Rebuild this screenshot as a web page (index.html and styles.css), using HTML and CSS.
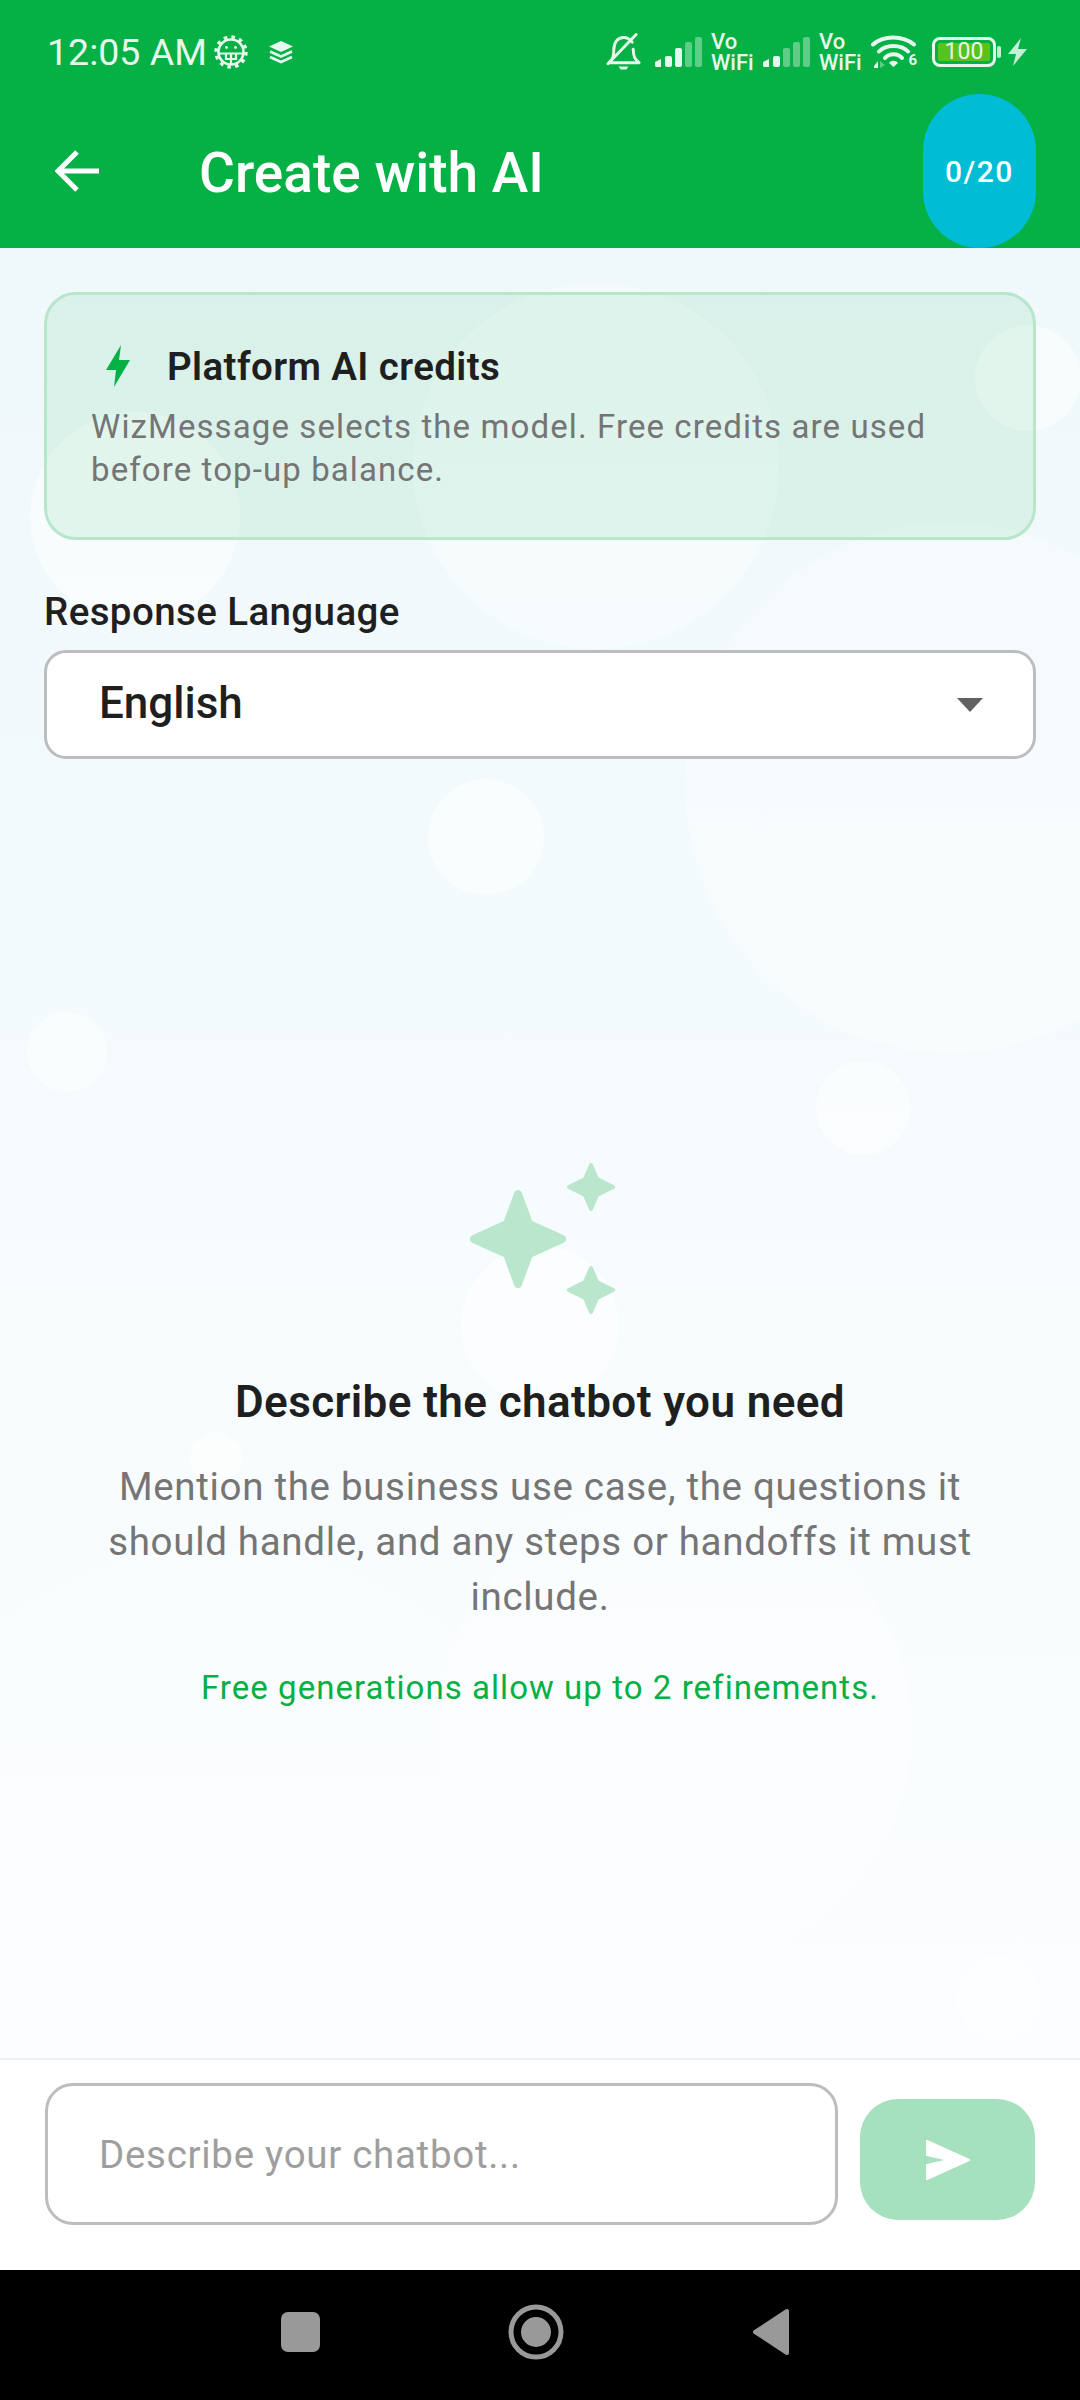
FILE: index.html

```html
<!DOCTYPE html>
<html lang="en">
<head>
    <meta charset="UTF-8">
    <meta name="viewport" content="width=device-width, initial-scale=1.0">
    <title>Create with AI</title>
    <link rel="stylesheet" href="styles.css">
</head>
<body>
<div class="screen">

    <!-- Green header with status bar -->
    <header class="header">
        <div class="status-bar">
            <div class="status-left">
                <span class="clock">12:05 AM</span>
                <svg class="gear" viewBox="0 0 34 34">
                    <circle cx="17" cy="17" r="12.5" fill="none" stroke="#e6f7ed" stroke-width="2.6"/>
                    <circle cx="17" cy="17" r="15" fill="none" stroke="#e6f7ed" stroke-width="3.4" stroke-dasharray="3.6 4.25"/>
                    <path d="M5 18.5H29M12 18.5V24H22V18.5M17 18.5V29" fill="none" stroke="#e6f7ed" stroke-width="2.2"/>
                    <circle cx="12.5" cy="12.5" r="1.4" fill="#e6f7ed"/>
                    <circle cx="21.5" cy="12.5" r="1.4" fill="#e6f7ed"/>
                </svg>
                <svg class="stack" viewBox="0 0 24 23">
                    <path d="M12 0L24 5.5L12 11L0 5.5Z" fill="#e6f7ed"/>
                    <path d="M1 10.5L12 15.5L23 10.5M1 16L12 21L23 16" fill="none" stroke="#e6f7ed" stroke-width="2.6"/>
                </svg>
            </div>
            <div class="status-right">
                <svg class="bell" viewBox="0 0 36 38">
                    <path d="M3 30C7 27 8 24 8 17C8 9 12 4 18 4C22 4 25 6 27 9M28 16C28 24 30 27 34 30H3" fill="none" stroke="#e6f7ed" stroke-width="3" stroke-linejoin="round" stroke-linecap="round"/>
                    <path d="M13 34H23L21 37H15Z" fill="#e6f7ed"/>
                    <path d="M2 31L31 1" stroke="#e6f7ed" stroke-width="3" stroke-linecap="round"/>
                </svg>
                <svg class="signal" viewBox="0 0 48 32">
                    <path d="M1 30V26L7 23V31H2Z" fill="#e6f7ed"/>
                    <rect x="11" y="20" width="7" height="11" rx="2" fill="#e6f7ed"/>
                    <rect x="21" y="12" width="7" height="19" rx="2" fill="#e6f7ed"/>
                    <rect x="31" y="6" width="7" height="25" rx="2" fill="#e6f7ed" opacity=".4"/>
                    <rect x="41" y="1" width="7" height="30" rx="2" fill="#e6f7ed" opacity=".4"/>
                </svg>
                <span class="vowifi">Vo<br>WiFi</span>
                <svg class="signal" viewBox="0 0 48 32">
                    <path d="M1 30V26L7 23V31H2Z" fill="#e6f7ed"/>
                    <rect x="11" y="20" width="7" height="11" rx="2" fill="#e6f7ed"/>
                    <rect x="21" y="12" width="7" height="19" rx="2" fill="#e6f7ed" opacity=".4"/>
                    <rect x="31" y="6" width="7" height="25" rx="2" fill="#e6f7ed" opacity=".4"/>
                    <rect x="41" y="1" width="7" height="30" rx="2" fill="#e6f7ed" opacity=".4"/>
                </svg>
                <span class="vowifi">Vo<br>WiFi</span>
                <div class="wifi">
                    <svg viewBox="0 0 46 34">
                        <path d="M2 9.5C12 0 32 0 43 9.5M8 16.5C15 9 30 9 37 16.5M14 23C18 18 27 18 31 23" fill="none" stroke="#e6f7ed" stroke-width="4" stroke-linecap="round"/>
                        <path d="M18 28C20 25 25 25 27 28L22.500 32Z" fill="#e6f7ed"/>
                        <path d="M3 31L7 26V33H3Z" fill="#e6f7ed"/>
                        <path d="M9 26L14 30L9 33Z" fill="#e6f7ed" opacity=".4"/>
                    </svg>
                    <span class="wifi-six">6</span>
                </div>
                <div class="battery-wrap">
                    <div class="battery"><span class="battery-fill">100</span></div>
                    <span class="battery-nub"></span>
                </div>
                <svg class="charge" viewBox="0 0 19 28">
                    <path d="M13 0L0 16H8L5 28L19 11H10Z" fill="#c9eed7"/>
                </svg>
            </div>
        </div>
        <div class="app-bar">
            <svg class="back" viewBox="0 0 44 44">
                <path d="M44 22H4M22 3L3 22L22 41" fill="none" stroke="#fff" stroke-width="5"/>
            </svg>
            <h1 class="title">Create with AI</h1>
            <div class="counter">0/20</div>
        </div>
    </header>

    <!-- Main content -->
    <main class="content">
        <div class="bubble b1"></div>
        <div class="bubble b2"></div>
        <div class="bubble b3"></div>
        <div class="bubble b4"></div>
        <div class="bubble b5"></div>
        <div class="bubble b6"></div>
        <div class="bubble b7"></div>
        <div class="bubble b8"></div>
        <div class="bubble b9"></div>
        <div class="bubble b10"></div>
        <div class="bubble b11"></div>
        <div class="bubble b12"></div>

        <section class="credits-card">
            <div class="credits-head">
                <svg class="bolt" viewBox="0 0 24 42">
                    <path d="M15 0L0 25H10L8 42L24 15H13Z" fill="#05b044"/>
                </svg>
                <span class="credits-title">Platform AI credits</span>
            </div>
            <p class="credits-text">WizMessage selects the model. Free credits are used before top-up balance.</p>
        </section>

        <label class="field-label">Response Language</label>
        <div class="select">
            <span>English</span>
            <span class="caret"></span>
        </div>

        <section class="empty">
            <svg class="sparkles" viewBox="0 0 160 160">
                <path class="star-big" d="M58 36L69 66L102 81L69 96L58 126L47 96L14 81L47 66Z"/>
                <path class="star-small" d="M131 7L137 21L153 29L137 37L131 51L125 37L109 29L125 21Z"/>
                <path class="star-small" d="M131 110L137 124L153 132L137 140L131 154L125 140L109 132L125 124Z"/>
            </svg>
            <h2 class="empty-title">Describe the chatbot you need</h2>
            <p class="empty-text">Mention the business use case, the questions it should handle, and any steps or handoffs it must include.</p>
            <p class="empty-note">Free generations allow up to 2 refinements.</p>
        </section>
    </main>

    <!-- Composer -->
    <footer class="composer">
        <div class="prompt">Describe your chatbot...</div>
        <button class="send">
            <svg viewBox="0 0 46 42">
                <path d="M2 2L44 21L2 40V26L24 21L2 16Z" fill="#fff" stroke="#fff" stroke-width="2" stroke-linejoin="round"/>
            </svg>
        </button>
    </footer>

    <!-- Android navigation bar -->
    <nav class="nav-bar">
        <span class="nav-square"></span>
        <svg class="nav-home" viewBox="0 0 56 56">
            <circle cx="28" cy="28" r="25" fill="none" stroke="#999" stroke-width="5"/>
            <circle cx="28" cy="28" r="15" fill="#999"/>
        </svg>
        <svg class="nav-back" viewBox="0 0 38 48">
            <path d="M35 3V45L3 24Z" fill="#999" stroke="#999" stroke-width="4" stroke-linejoin="round"/>
        </svg>
    </nav>

</div>
</body>
</html>
```

FILE: styles.css

```css
/* Basic resets and body styling */
* {
    box-sizing: border-box;
}

body {
    margin: 0;
    font-family: Roboto, Arial, sans-serif;
    background-color: #fff;
}

.screen {
    width: 1080px;
    height: 2400px;
    display: flex;
    flex-direction: column;
    overflow: hidden;
}

/* Header */
.header {
    height: 248px;
    background-color: #05b044;
    flex-shrink: 0;
}

.status-bar {
    height: 94px;
    padding: 10px 53px 0 47px;
    display: flex;
    justify-content: space-between;
    align-items: center;
    color: #e6f7ed;
}

.status-left,
.status-right {
    display: flex;
    align-items: center;
}

.clock {
    font-size: 37.5px;
    line-height: 40px;
}

.gear {
    width: 34px;
    height: 34px;
    margin-left: 7px;
}

.stack {
    width: 24px;
    height: 23px;
    margin-left: 21px;
}

.bell {
    width: 35px;
    height: 38px;
    margin-right: 3px;
}

.signal {
    width: 48px;
    height: 32px;
    margin-left: 10px;
}

.vowifi {
    width: 41px;
    margin-left: 9px;
    font-size: 22px;
    line-height: 21px;
    font-weight: 500;
}

.wifi {
    position: relative;
    width: 46px;
    height: 34px;
    margin-left: 11px;
}

.wifi svg {
    display: block;
    width: 46px;
    height: 34px;
}

.wifi-six {
    position: absolute;
    right: 0;
    bottom: 1px;
    font-size: 15px;
    line-height: 15px;
    font-weight: 700;
}

.battery-wrap {
    display: flex;
    align-items: center;
    margin-left: 15px;
}

.battery {
    width: 64px;
    height: 30px;
    padding: 3px;
    border: 3px solid #e6f7ed;
    border-radius: 8px;
    display: flex;
}

.battery-fill {
    flex: 1;
    background-color: #57c31b;
    border-radius: 2px;
    font-size: 23px;
    line-height: 18px;
    text-align: center;
}

.battery-nub {
    width: 4px;
    height: 12px;
    margin-left: 1px;
    border-radius: 2px;
    background-color: #c9eed7;
}

.charge {
    width: 19px;
    height: 28px;
    margin-left: 7px;
}

.app-bar {
    height: 154px;
    padding: 0 44px 0 55px;
    display: flex;
    align-items: center;
}

.back {
    width: 44px;
    height: 44px;
}

.title {
    flex: 1;
    margin: 3px 0 0 100px;
    color: #fff;
    font-size: 55px;
    font-weight: 500;
}

.counter {
    align-self: stretch;
    width: 113px;
    display: flex;
    align-items: center;
    justify-content: center;
    border-radius: 57px;
    background-color: #00bcd4;
    color: #fff;
    font-size: 30px;
    font-weight: 500;
    letter-spacing: 1.5px;
}

/* Main content */
.content {
    position: relative;
    flex: 1;
    overflow: hidden;
    padding: 44px 44px 0;
    background: linear-gradient(180deg, #eff8fb 0%, #f5fbfd 45%, #fbfdfe 100%);
}

.bubble {
    position: absolute;
    border-radius: 50%;
    background-color: rgba(255, 255, 255, 0.35);
}

.b1 { left: 413px; top: 35px; width: 366px; height: 366px; }
.b2 { left: 30px; top: 164px; width: 210px; height: 210px; background-color: rgba(255, 255, 255, 0.5); }
.b3 { left: 975px; top: 77px; width: 106px; height: 106px; background-color: rgba(255, 255, 255, 0.5); }
.b4 { left: 685px; top: 275px; width: 530px; height: 530px; background-color: rgba(255, 255, 255, 0.28); }
.b5 { left: 428px; top: 531px; width: 116px; height: 116px; background-color: rgba(255, 255, 255, 0.5); }
.b6 { left: 27px; top: 764px; width: 80px; height: 80px; background-color: rgba(255, 255, 255, 0.5); }
.b7 { left: 816px; top: 813px; width: 94px; height: 94px; background-color: rgba(255, 255, 255, 0.5); }
.b8 { left: 461px; top: 998px; width: 158px; height: 158px; background-color: rgba(255, 255, 255, 0.6); }
.b9 { left: 190px; top: 1184px; width: 52px; height: 52px; background-color: rgba(255, 255, 255, 0.6); }
.b10 { left: 438px; top: 1245px; width: 474px; height: 474px; background-color: rgba(255, 255, 255, 0.3); }
.b11 { left: -130px; top: 1300px; width: 700px; height: 700px; background-color: rgba(255, 255, 255, 0.25); }
.b12 { left: 957px; top: 1708px; width: 84px; height: 84px; background-color: rgba(255, 255, 255, 0.6); }

.credits-card {
    position: relative;
    height: 248px;
    padding: 50px 44px 0 44px;
    border: 3px solid #b7e6ca;
    border-radius: 32px;
    background-color: rgba(5, 176, 68, 0.09);
}

.credits-head {
    display: flex;
    align-items: center;
    margin-bottom: 18px;
    height: 42px;
}

.bolt {
    width: 24px;
    height: 42px;
    margin-left: 15px;
}

.credits-title {
    margin-left: 37px;
    color: #1f1f1f;
    font-size: 38.5px;
    font-weight: 600;
    letter-spacing: 0.4px;
}

.credits-text {
    margin: 0;
    color: #757575;
    font-size: 33px;
    line-height: 43px;
    letter-spacing: 1.1px;
}

.field-label {
    position: relative;
    display: block;
    margin-top: 50px;
    color: #1f1f1f;
    font-size: 38.5px;
    line-height: 44px;
    font-weight: 500;
    letter-spacing: 0.4px;
}

.select {
    position: relative;
    height: 109px;
    margin-top: 16px;
    padding: 0 50px 3px 52px;
    display: flex;
    align-items: center;
    justify-content: space-between;
    border: 3px solid #bdbdbd;
    border-radius: 22px;
    background-color: #fff;
    color: #1f1f1f;
    font-size: 44px;
    font-weight: 500;
}

.caret {
    width: 0;
    height: 0;
    margin-top: 4px;
    border-left: 13px solid transparent;
    border-right: 13px solid transparent;
    border-top: 14px solid #616161;
}

/* Empty state */
.empty {
    position: relative;
    display: flex;
    flex-direction: column;
    align-items: center;
    text-align: center;
    margin-top: 399px;
}

.sparkles {
    width: 160px;
    height: 160px;
}

.star-big {
    fill: #b9e6cd;
    stroke: #b9e6cd;
    stroke-width: 8;
    stroke-linejoin: round;
}

.star-small {
    fill: #b9e6cd;
    stroke: #b9e6cd;
    stroke-width: 4;
    stroke-linejoin: round;
}

.empty-title {
    margin: 56px 0 0;
    color: #1f1f1f;
    font-size: 44px;
    line-height: 56px;
    font-weight: 600;
    letter-spacing: 0.4px;
}

.empty-text {
    width: 880px;
    margin: 29px 0 0;
    color: #757575;
    font-size: 38.5px;
    line-height: 55px;
    letter-spacing: 0.68px;
}

.empty-note {
    margin: 42px 0 0;
    color: #05b044;
    font-size: 33px;
    line-height: 44px;
    letter-spacing: 1.05px;
}

/* Composer */
.composer {
    height: 212px;
    flex-shrink: 0;
    padding: 23px 45px 0;
    display: flex;
    align-items: flex-start;
    gap: 22px;
    border-top: 2px solid #f0f0f0;
    background-color: #fff;
}

.prompt {
    flex: 1;
    height: 142px;
    padding: 0 51px;
    display: flex;
    align-items: center;
    border: 3px solid #bdbdbd;
    border-radius: 28px;
    color: #9e9e9e;
    font-size: 38.5px;
    letter-spacing: 0.7px;
}

.send {
    width: 175px;
    height: 121px;
    margin-top: 16px;
    padding: 0;
    border: none;
    border-radius: 38px;
    background-color: #a6e1bd;
}

.send svg {
    display: block;
    width: 46px;
    height: 42px;
    margin: 0 auto;
}

/* Android navigation bar */
.nav-bar {
    height: 130px;
    flex-shrink: 0;
    display: flex;
    align-items: center;
    background-color: #000;
    padding: 0 0 6px 281px;
}

.nav-square {
    width: 39px;
    height: 40px;
    border-radius: 7px;
    background-color: #999;
}

.nav-home {
    width: 56px;
    height: 56px;
    margin-left: 188px;
}

.nav-back {
    width: 38px;
    height: 48px;
    margin-left: 188px;
}
```
